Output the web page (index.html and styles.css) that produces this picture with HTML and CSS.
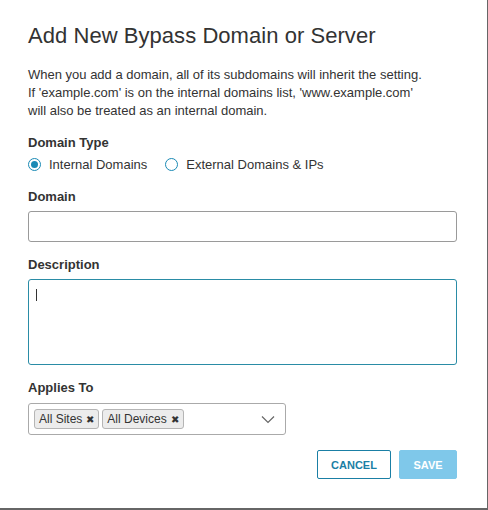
FILE: index.html
```html
<!DOCTYPE html>
<html>
<head>
<meta charset="utf-8">
<link rel="stylesheet" href="styles.css">
</head>
<body>
<div class="modal">
  <h1 class="title">Add New Bypass Domain or Server</h1>
  <p class="intro">When you add a domain, all of its subdomains will inherit the setting.<br>If 'example.com' is on the internal domains list, 'www.example.com'<br>will also be treated as an internal domain.</p>

  <div class="label label-type">Domain Type</div>
  <div class="radios">
    <label class="radio"><span class="dot checked"></span>Internal Domains</label>
    <label class="radio"><span class="dot"></span>External Domains &amp; IPs</label>
  </div>

  <div class="label label-domain">Domain</div>
  <div class="input"></div>

  <div class="label label-gap">Description</div>
  <div class="textarea"><span class="caret"></span></div>

  <div class="label label-gap">Applies To</div>
  <div class="select">
    <span class="chip">All Sites <span class="x">&#x2716;</span></span>
    <span class="chip">All Devices <span class="x">&#x2716;</span></span>
    <svg class="chev" width="14" height="9" viewBox="0 0 14 9"><path d="M1 1.5 L7 7.5 L13 1.5" fill="none" stroke="#666" stroke-width="1.2"/></svg>
  </div>

  <div class="actions">
    <button class="btn cancel">CANCEL</button>
    <button class="btn save">SAVE</button>
  </div>
</div>
</body>
</html>
```
FILE: styles.css
```css
html, body {
  margin: 0;
  padding: 0;
  background: #fff;
}
.modal {
  box-sizing: border-box;
  width: 488px;
  height: 510px;
  padding: 23px 30px 0 28px;
  border-right: 1px solid #666;
  border-bottom: 2px solid #666;
  font-family: "Liberation Sans", Arial, sans-serif;
  color: #333;
}
.title {
  margin: 0;
  font-size: 22px;
  font-weight: normal;
  line-height: 26px;
  color: #333;
  letter-spacing: 0.05px;
}
.intro {
  margin: 17px 0 0;
  font-size: 13px;
  line-height: 18px;
  color: #333;
}
.label {
  font-size: 13px;
  font-weight: bold;
  line-height: 18px;
  color: #333;
}
.label-type { margin-top: 14px; }
.label-domain { margin-top: 15px; }
.label-gap { margin-top: 14px; }
.radios {
  display: flex;
  gap: 18px;
  margin-top: 3px;
  height: 18px;
  align-items: center;
}
.radio {
  display: flex;
  align-items: center;
  gap: 8px;
  font-size: 13px;
  color: #333;
}
.dot {
  box-sizing: border-box;
  width: 13px;
  height: 13px;
  border-radius: 50%;
  border: 1px solid #1a8ab5;
  background: #fff;
  position: relative;
}
.dot.checked::after {
  content: "";
  position: absolute;
  left: 2px;
  top: 2px;
  width: 7px;
  height: 7px;
  border-radius: 50%;
  background: #1a8ab5;
}
.input {
  box-sizing: border-box;
  margin-top: 5px;
  height: 31px;
  border: 1px solid #9a9a9a;
  border-radius: 3px;
}
.textarea {
  box-sizing: border-box;
  margin-top: 5px;
  height: 86px;
  border: 1px solid #2a8ca6;
  border-radius: 3px;
  padding: 9px 0 0 7px;
}
.caret {
  display: block;
  width: 1px;
  height: 12px;
  background: #333;
}
.select {
  box-sizing: border-box;
  margin-top: 6px;
  width: 258px;
  height: 32px;
  border: 1px solid #aaa;
  border-radius: 3px;
  display: flex;
  align-items: center;
  padding-left: 5px;
  gap: 3px;
}
.chip {
  box-sizing: border-box;
  height: 20px;
  display: inline-flex;
  align-items: center;
  padding: 0 4px 0 4px;
  background: #ececec;
  border: 1px solid #b5b5b5;
  border-radius: 3px;
  font-size: 12px;
  color: #333;
  white-space: nowrap;
}
.x {
  font-size: 10px;
  margin-left: 4px;
  color: #333;
}
.chev {
  margin-left: auto;
  margin-right: 10px;
}
.actions {
  display: flex;
  justify-content: flex-end;
  gap: 8px;
  margin-top: 15px;
}
.btn {
  box-sizing: border-box;
  height: 29px;
  border-radius: 2px;
  font-family: "Liberation Sans", Arial, sans-serif;
  font-size: 11px;
  font-weight: bold;
  padding: 0;
}
.cancel {
  width: 74px;
  background: #fff;
  border: 1px solid #1a7fa5;
  color: #1a7fa5;
}
.save {
  width: 58px;
  background: #7fc8ea;
  border: 1px solid #7fc8ea;
  color: #fff;
}
```
